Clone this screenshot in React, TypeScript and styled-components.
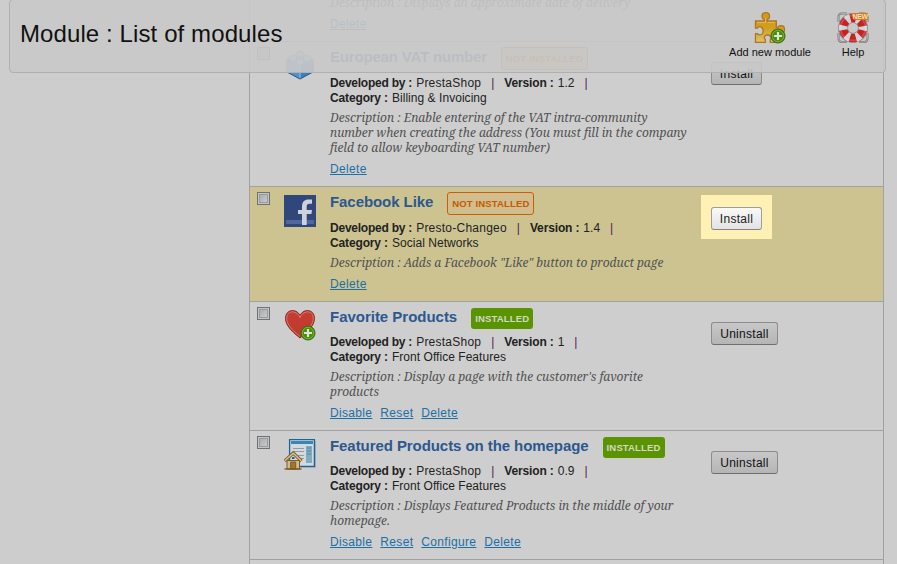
import React from "react";
import styled, { createGlobalStyle, css } from "styled-components";

const GlobalStyle = createGlobalStyle`
  body {
    margin: 0;
    background: #cdcdcd;
    color: #222;
    font: 12px/15px "Liberation Sans", Arial, sans-serif;
    overflow: hidden;
  }
`;

const Page = styled.div`
  position: relative;
  box-sizing: border-box;
  height: 564px;
  padding-left: 249px;
  overflow: hidden;
`;

const ModuleList = styled.div`
  box-sizing: border-box;
  width: 635px;
  margin-top: -15px;
  border: solid #a1a1a1;
  border-width: 0 1px;
  background: #cecece;
`;

const Row = styled.section<{ $highlighted?: boolean }>`
  display: grid;
  grid-template-columns: 27px 46px 381px 1fr;
  align-items: start;
  padding: 5px 0 9px 7px;
  border-top: 1px solid #a1a1a4;
  background: ${(p) => (p.$highlighted ? "#cdc391" : "transparent")};
`;

const Checkbox = styled.span`
  box-sizing: border-box;
  width: 13px;
  height: 13px;
  padding: 1px;
  border: 1px solid #717171;
  background: #c4c4c4;

  &::before {
    content: "";
    display: block;
    box-sizing: border-box;
    width: 9px;
    height: 9px;
    border: 1px solid #969ba0;
    background: linear-gradient(135deg, #a9adb1, #c9c9c9);
  }
`;

const IconCell = styled.div`
  grid-column: 2;
  height: 32px;
  margin-top: 3px;

  svg {
    display: block;
  }
`;

const Details = styled.div`
  grid-column: 3;
`;

const Heading = styled.div<{ $installed: boolean }>`
  display: flex;
  align-items: flex-start;
  gap: 14px;
  height: ${(p) => (p.$installed ? 28 : 29)}px;
`;

const Name = styled.h3<{ $tracking?: number }>`
  margin: 0;
  color: #2c5890;
  font-size: 15px;
  font-weight: bold;
  line-height: 20px;
  letter-spacing: ${(p) => p.$tracking ?? -0.07}px;
`;

const Badge = styled.span<{ $installed: boolean }>`
  box-sizing: border-box;
  border-radius: 3px;
  font-size: 9.5px;
  font-weight: bold;
  letter-spacing: 0.15px;
  line-height: 21px;
  text-align: center;
  white-space: nowrap;
  ${(p) =>
    p.$installed
      ? css`
          width: 62px;
          height: 21px;
          margin-top: 1px;
          background: #5a9400;
          color: #d3d8c8;
        `
      : css`
          width: 87px;
          height: 23px;
          border: 1px solid #cc5f06;
          background: #d1bd8d;
          color: #c55a00;
        `}
`;

const Meta = styled.div`
  display: flex;
  height: 15px;
  white-space: nowrap;
`;

const Label = styled.b`
  margin-right: 4px;
  letter-spacing: -0.23px;
`;

const WideLabel = styled(Label)`
  letter-spacing: -0.14px;
`;

const Publisher = styled.span`
  letter-spacing: 0.24px;
`;

const Value = styled.span`
  letter-spacing: 0.04px;
`;

const Separator = styled.span`
  width: 23px;
  color: #53204f;
  text-align: center;
`;

const Description = styled.p`
  margin: 4px 0 0;
  color: #525252;
  font: italic 12px/15px "Noto Serif", "DejaVu Serif Condensed", serif;
  letter-spacing: -0.025px;
  white-space: pre;
`;

const Links = styled.div`
  display: flex;
  gap: 8px;
  margin-top: 7px;
`;

const Link = styled.a`
  color: #1c70a6;
  letter-spacing: 0.33px;
  text-decoration: underline;
  text-underline-offset: 1px;
`;

const ActionCell = styled.div`
  display: flex;
  grid-column: 4;
  padding-top: 15px;
`;

const Spotlight = styled.div<{ $on?: boolean }>`
  ${(p) =>
    p.$on &&
    css`
      margin: -12px -10px;
      padding: 12px 10px 9px;
      background: #fff0b4;
    `}
`;

const Button = styled.button<{ $bright?: boolean; $wide?: boolean }>`
  display: block;
  box-sizing: border-box;
  width: ${(p) => (p.$wide ? 67 : 51)}px;
  height: 23px;
  padding: 1px 0 0;
  border: 1px solid ${(p) => (p.$bright ? "#9d9d9d" : "#8c8c8c")};
  border-bottom-color: ${(p) => (p.$bright ? "#858585" : "#6e6e6e")};
  border-radius: 3px;
  background: ${(p) =>
    p.$bright
      ? "linear-gradient(#f9f9f9, #e3e3e3)"
      : "linear-gradient(#c8c8c8, #b5b5b5)"};
  color: ${(p) => (p.$bright ? "#222" : "#111")};
  font: 12px/20px "Liberation Sans", Arial, sans-serif;
  letter-spacing: 0.28px;
  text-align: center;
`;

const ListEnd = styled.div`
  height: 20px;
  border-top: 1px solid #a1a1a4;
`;

const Toolbar = styled.header`
  position: absolute;
  top: -1px;
  left: 9px;
  display: flex;
  align-items: flex-start;
  justify-content: space-between;
  box-sizing: border-box;
  width: 877px;
  height: 74px;
  padding: 0 13px 0 10px;
  border: 1px solid #b0b0b0;
  border-radius: 4px;
  background: rgba(200, 200, 200, 0.91);
`;

const PageTitle = styled.h1`
  margin: 19px 0 0;
  color: #111;
  font-size: 24px;
  font-weight: normal;
  line-height: 30px;
  letter-spacing: 0.1px;
`;

const ToolbarActions = styled.div`
  display: flex;
  gap: 23px;
  padding-top: 12px;
`;

const ToolbarAction = styled.div`
  display: flex;
  flex-direction: column;
  align-items: center;
  min-width: 38px;
  color: #111;
  font-size: 11px;
  line-height: 14px;

  svg {
    margin-bottom: 1px;
  }
`;

const PlusBadge = () => (
  <g>
    <circle cx="24" cy="24" r="7" fill="#4c8c0c" stroke="#376d08" />
    <circle cx="24" cy="24" r="5.7" fill="none" stroke="#85b94a" strokeWidth=".8" />
    <path d="M24 20v8M20 24h8" stroke="#dde5d4" strokeWidth="2.2" />
  </g>
);

const PuzzleIcon = () => (
  <svg width="32" height="32" viewBox="0 0 32 32">
    <defs>
      <linearGradient id="puzzle" x1="0" y1="0" x2="0" y2="1">
        <stop offset="0" stopColor="#d49a16" />
        <stop offset=".5" stopColor="#cf9f1d" />
        <stop offset="1" stopColor="#ddc568" />
      </linearGradient>
    </defs>
    <path
      d="M1.500 9h8.800V7.300C8.600 6.800 8 5.700 8 4.400 8 2.200 9.600.7 11.800.7s3.800 1.500 3.800 3.700c0 1.300-.6 2.400-2.300 2.900V9h9v6.300h1.500c.5-1.200 1.700-1.700 3-1.700 2.200 0 3.700 1.700 3.700 3.800S29 21.300 26.800 21.300c-1.300 0-2.500-.6-3-1.900h-1.500v11h-6v-3c1.200-.7 1.100-4.400-2.700-4.400s-3.900 3.500-2.300 4.400v3H1.500V21.600h2c.5 1 1.500 1.300 2.200 1.300 2 0 3.500-1.800 3.500-4s-1.500-4.200-3.500-4.200c-.8 0-1.700.4-2.200 1.400h-2z"
      fill="url(#puzzle)"
      stroke="#b07129"
      strokeWidth="1.3"
    />
    <path d="M3 10.400h8.600V6M14 10.400h7" fill="none" stroke="#e5c66d" strokeWidth=".8" />
    <PlusBadge />
  </svg>
);

const LifebuoyIcon = () => (
  <svg width="32" height="32" viewBox="0 0 32 32">
    <path
      d="M1.500 10V5q0-3.500 3.500-3.500h5M22 1.500h5q3.500 0 3.500 3.500v5M30.500 21v5q0 4-3.500 4h-5M10 30H5q-3.500 0-3.500-4v-5"
      fill="none"
      stroke="#777"
      strokeWidth="2"
    />
    <path
      d="M1.500 10V5q0-3.500 3.500-3.500h5M22 1.500h5q3.500 0 3.500 3.500v5M30.500 21v5q0 4-3.500 4h-5M10 30H5q-3.500 0-3.500-4v-5"
      fill="none"
      stroke="#bbb"
      strokeWidth=".8"
    />
    <circle cx="16" cy="16" r="10" fill="none" stroke="#888" strokeWidth="10" />
    <circle cx="16" cy="16" r="10" fill="none" stroke="#d2d2d2" strokeWidth="8.600" />
    <circle
      cx="16"
      cy="16"
      r="10"
      fill="none"
      stroke="#c52222"
      strokeWidth="8.600"
      strokeDasharray="6 4.472"
      transform="rotate(13 16 16)"
    />
    <circle cx="16" cy="16" r="12.500" fill="none" stroke="#fff" strokeOpacity=".17" strokeWidth="2" />
    <path d="M14 1h17v7H17z" fill="#d77a1b" />
    <text
      x="15.500"
      y="7.400"
      fill="#eeddc4"
      fontFamily="Liberation Sans, Arial, sans-serif"
      fontSize="7"
      fontWeight="bold"
      textLength="15.500"
    >
      NEW
    </text>
  </svg>
);

const BrickIcon = () => (
  <svg width="32" height="32" viewBox="0 0 32 32">
    <path d="M2 9.500 16 4l14 5.500v12L16 29 2 21.500z" fill="#3d7fbb" />
    <path d="M2 9.500 16 15v14L2 21.500z" fill="#4f92cb" />
    <path d="M2 9.500 16 4l14 5.500L16 15z" fill="#78aad5" />
    <g fill="#8bb7dc" stroke="#376fa4" strokeWidth=".7">
      <path d="M12 3v3c1 2 7 2 8 0V3c-1-2-7-2-8 0zM5 7v3c1 2 7 2 8 0V7c-1-2-7-2-8 0zM19 7v3c1 2 7 2 8 0V7c-1-2-7-2-8 0zM12 10v3c1 2 7 2 8 0v-3c-1-2-7-2-8 0z" />
    </g>
    <path d="M16 15v14" stroke="#9bc0df" />
    <path d="M2 21.500 16 29l14-7.500" fill="none" stroke="#2c5780" />
  </svg>
);

const FacebookIcon = () => (
  <svg width="32" height="32" viewBox="0 0 32 32">
    <path d="M0 0h32v32H0z" fill="#2f477b" />
    <path d="M2 25h28v4H2z" fill="#50679a" />
    <path
      d="M18 30V19h-4v-4h4v-3.500C18 7 20.500 4.500 24.500 4.500h3.500v4.200h-2.500c-2 0-2.800.8-2.800 2.600V15H28l-.6 4h-4.700v11z"
      fill="#cfd2d8"
    />
  </svg>
);

const HeartIcon = () => (
  <svg width="32" height="32" viewBox="0 0 32 32">
    <defs>
      <linearGradient id="heart" x1="0" y1="0" x2="0" y2="1">
        <stop offset="0" stopColor="#cb3b31" />
        <stop offset="1" stopColor="#b73b30" />
      </linearGradient>
    </defs>
    <g transform="translate(0 -1)">
      <path
        d="M16 29C12 25.500 1.500 18 1.500 9.500 1.500 4.500 4.600 1.600 8.500 1.600c3.400 0 6 1.800 7.500 4.800 1.500-3 4.100-4.800 7.500-4.800 3.900 0 7 2.900 7 7.900C30.500 18 20 25.500 16 29z"
        fill="url(#heart)"
        stroke="#842821"
      />
      <path
        d="M16 27.400C12 24 2.700 17.300 2.700 9.500c0-4.200 2.500-6.700 5.800-6.700 3.500 0 6.300 2.500 7.500 5.800 1.200-3.300 4-5.800 7.500-5.800 3.300 0 5.800 2.500 5.800 6.700 0 3-1.300 5.800-3.300 8.200"
        fill="none"
        stroke="#d4837a"
        strokeWidth=".9"
      />
      <PlusBadge />
    </g>
  </svg>
);

const HomePageIcon = () => (
  <svg width="32" height="32" viewBox="0 0 32 32">
    <g transform="translate(0 -1)">
      <path d="M6 29.500h25.500V3" fill="none" stroke="#aaa" />
      <path d="M5.600 1.600h24.800v26.800H5.600z" fill="#d3d9dd" stroke="#16689b" strokeWidth="1.300" />
      <path d="M7 3h22v3H7z" fill="#3b85b6" />
      <path d="M22 8h6v17h-6z" fill="#7fabc3" />
      <path d="M23 10h4M23 13h4M23 16h4" stroke="#5289a8" />
      <path d="M9 10.500h11M9 13.500h11M14 17.500h6M16 20.500h4" stroke="#929ba3" />
      <path d="M3 22.500h12.500V31H3z" fill="#cebd93" stroke="#7c5a28" />
      <path d="M.7 23 9.200 15l8.300 8" fill="none" stroke="#805b25" strokeWidth="3.200" />
      <path d="M.9 22.800 9.200 15.200l8.100 7.600" fill="none" stroke="#d9c493" strokeWidth="1.400" />
      <path d="M6.700 24h5v7h-5z" fill="#a7771a" stroke="#805b25" />
      <path d="M8 19h2.500v2H8z" fill="#1d5b94" />
      <path d="M.5 31h17" stroke="#7c5a28" strokeWidth="1.400" />
    </g>
  </svg>
);

type ModuleInfo = {
  name?: string;
  tracking?: number;
  Icon?: React.ComponentType;
  publisher?: string;
  version?: string;
  category?: string;
  description: string;
  installed?: boolean;
  highlighted?: boolean;
  links: string[];
};

const modules: ModuleInfo[] = [
  {
    description: "Displays an approximate date of delivery",
    links: ["Delete"],
  },
  {
    name: "European VAT number",
    tracking: -0.18,
    Icon: BrickIcon,
    publisher: "PrestaShop",
    version: "1.2",
    category: "Billing & Invoicing",
    description:
      "Enable entering of the VAT intra-community\nnumber when creating the address (You must fill in the company\nfield to allow keyboarding VAT number)",
    links: ["Delete"],
  },
  {
    name: "Facebook Like",
    Icon: FacebookIcon,
    publisher: "Presto-Changeo",
    version: "1.4",
    category: "Social Networks",
    description: 'Adds a Facebook "Like" button to product page',
    highlighted: true,
    links: ["Delete"],
  },
  {
    name: "Favorite Products",
    tracking: -0.02,
    Icon: HeartIcon,
    publisher: "PrestaShop",
    version: "1",
    category: "Front Office Features",
    description: "Display a page with the customer's favorite\nproducts",
    installed: true,
    links: ["Disable", "Reset", "Delete"],
  },
  {
    name: "Featured Products on the homepage",
    Icon: HomePageIcon,
    publisher: "PrestaShop",
    version: "0.9",
    category: "Front Office Features",
    description: "Displays Featured Products in the middle of your\nhomepage.",
    installed: true,
    links: ["Disable", "Reset", "Configure", "Delete"],
  },
];

const ModuleRow = ({ module: m }: { module: ModuleInfo }) => {
  const installed = !!m.installed;
  return (
    <Row $highlighted={m.highlighted}>
      {m.name && <Checkbox />}
      {m.Icon && (
        <IconCell>
          <m.Icon />
        </IconCell>
      )}
      <Details>
        {m.name && (
          <>
            <Heading $installed={installed}>
              <Name $tracking={m.tracking}>{m.name}</Name>
              <Badge $installed={installed}>{installed ? "INSTALLED" : "NOT INSTALLED"}</Badge>
            </Heading>
            <Meta>
              <Label>Developed by :</Label>
              <Publisher>{m.publisher}</Publisher>
              <Separator>|</Separator>
              <WideLabel>Version :</WideLabel>
              <Value>{m.version}</Value>
              <Separator>|</Separator>
            </Meta>
            <Meta>
              <WideLabel>Category :</WideLabel>
              <Value>{m.category}</Value>
            </Meta>
          </>
        )}
        <Description>{`Description : ${m.description}`}</Description>
        <Links>
          {m.links.map((link) => (
            <Link key={link}>{link}</Link>
          ))}
        </Links>
      </Details>
      {m.name && (
        <ActionCell>
          <Spotlight $on={m.highlighted}>
            <Button $bright={m.highlighted} $wide={installed}>
              {installed ? "Uninstall" : "Install"}
            </Button>
          </Spotlight>
        </ActionCell>
      )}
    </Row>
  );
};

export default function App() {
  return (
    <>
      <GlobalStyle />
      <Page>
        <ModuleList>
          {modules.map((m) => (
            <ModuleRow key={m.description} module={m} />
          ))}
          <ListEnd />
        </ModuleList>
        <Toolbar>
          <PageTitle>Module : List of modules</PageTitle>
          <ToolbarActions>
            <ToolbarAction>
              <PuzzleIcon />
              Add new module
            </ToolbarAction>
            <ToolbarAction>
              <LifebuoyIcon />
              Help
            </ToolbarAction>
          </ToolbarActions>
        </Toolbar>
      </Page>
    </>
  );
}
